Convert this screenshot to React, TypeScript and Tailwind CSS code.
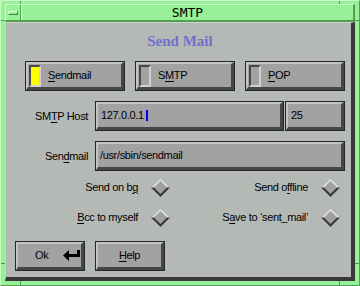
import React from "react";

const sans = { fontFamily: '"Liberation Sans", Arial, sans-serif' };

function Raised({ className, inner, children }: { className: string; inner?: string; children?: React.ReactNode }) {
  return (
    <div className={`border border-[#262626] ${className}`}>
      <div
        className={`h-full w-full border-t-2 border-l-2 border-b-[3px] border-r-[3px] border-t-[#c4c4c4] border-l-[#c4c4c4] border-b-[#464646] border-r-[#464646] bg-[#a2a2a2] flex items-center ${inner ?? ""}`}
      >
        {children}
      </div>
    </div>
  );
}

function Indicator({ on }: { on?: boolean }) {
  return (
    <div
      className={`ml-[1px] w-[12px] h-[22px] border-2 border-t-[#4a4a4a] border-l-[#4a4a4a] border-b-[#d2d2d2] border-r-[#d2d2d2] ${on ? "bg-[#ffff00]" : "bg-[#a2a2a2]"}`}
    />
  );
}

function Diamond() {
  return (
    <svg width="19" height="19" viewBox="0 0 19 19" className="shrink-0">
      <polygon points="9.5,0 19,9.5 9.5,19 0,9.5" fill="#3a3a3a" />
      <polygon points="0,9.5 9.5,0 19,9.5" fill="#dcdcdc" />
      <polygon points="9.5,3 16,9.5 9.5,16 3,9.5" fill="#a0a0a0" />
    </svg>
  );
}

function Check({ children, w }: { children: React.ReactNode; w: string }) {
  return (
    <div className={`flex items-center justify-end gap-[13px] ${w}`}>
      <span className="text-[11px] tracking-[-0.35px] text-black whitespace-nowrap">{children}</span>
      <Diamond />
    </div>
  );
}

const U = ({ children }: { children: React.ReactNode }) => (
  <span className="underline underline-offset-2 decoration-1">{children}</span>
);

export default function App() {
  return (
    <div
      className="relative w-[360px] h-[286px] bg-[#98f098] border border-t-[#c8ffc8] border-l-[#c8ffc8] border-b-[#50a050] border-r-[#50a050] pt-[3px] pl-[4px] pr-[4px] pb-[4px] flex flex-col"
      style={sans}
    >
      {/* frame corner separators */}
      <div className="absolute left-[19px] top-0 w-px h-[3px] bg-[#50a050]" />
      <div className="absolute right-[19px] top-0 w-px h-[3px] bg-[#50a050]" />
      <div className="absolute left-0 top-[19px] w-[4px] h-px bg-[#50a050]" />
      <div className="absolute right-0 top-[19px] w-[4px] h-px bg-[#50a050]" />
      <div className="absolute left-[19px] bottom-0 w-px h-[4px] bg-[#50a050]" />
      <div className="absolute right-[19px] bottom-0 w-px h-[4px] bg-[#50a050]" />
      <div className="absolute left-0 bottom-[21px] w-[4px] h-px bg-[#50a050]" />
      <div className="absolute right-0 bottom-[21px] w-[4px] h-px bg-[#50a050]" />

      {/* title bar */}
      <div className="h-[18px] flex border-t border-l border-b-2 border-r-2 border-t-[#c8ffc8] border-l-[#c8ffc8] border-b-[#50a050] border-r-[#50a050]">
        <div className="w-[15px] h-full flex items-center justify-center border-r border-r-[#50a050]">
          <div className="w-[10px] h-[4px] border border-t-[#e0ffe0] border-l-[#e0ffe0] border-b-[#408040] border-r-[#408040]" />
        </div>
        <div
          className="flex-1 flex items-center justify-center text-[13px] leading-none text-black border-l border-l-[#c8ffc8]"
          style={{ fontFamily: '"DejaVu Sans Mono", monospace' }}
        >
          SMTP
        </div>
      </div>

      {/* client panel */}
      <div className="flex-1 bg-[#b5b9b5] border-t border-l border-b-4 border-r-4 border-t-[#cdd1cd] border-l-[#cdd1cd] border-b-[#383838] border-r-[#383838] pl-[9px] pr-[6px] flex flex-col">
        <div
          className="h-[38px] pt-[9px] text-center text-[15px] leading-[18px] font-bold text-[#7070d0]"
          style={{ fontFamily: '"Liberation Serif", "Times New Roman", serif' }}
        >
          Send Mail
        </div>

        <div className="flex gap-[10px] pl-[10px] text-[11px] tracking-[-0.35px] text-black">
          <Raised className="w-[100px] h-[30px]">
            <Indicator on />
            <span className="ml-[7px]"><U>S</U>endmail</span>
          </Raised>
          <Raised className="w-[100px] h-[30px]">
            <Indicator />
            <span className="ml-[7px]">S<U>M</U>TP</span>
          </Raised>
          <Raised className="w-[100px] h-[30px]">
            <Indicator />
            <span className="ml-[7px]"><U>P</U>OP</span>
          </Raised>
        </div>

        <div className="mt-[10px] flex items-center text-[11px] tracking-[-0.35px] text-black">
          <div className="w-[80px] pr-[7px] text-right whitespace-nowrap">SM<U>T</U>P Host</div>
          <Raised className="w-[189px] h-[30px]" inner="pl-[3px]">
            <span>127.0.0.1</span>
            <span className="ml-[2px] inline-block w-[2px] h-[11px] bg-[#0000ff]" />
          </Raised>
          <Raised className="ml-px w-[60px] h-[30px]" inner="pl-[3px]">
            <span>25</span>
          </Raised>
        </div>

        <div className="mt-[10px] flex items-center text-[11px] tracking-[-0.35px] text-black">
          <div className="w-[80px] pr-[7px] text-right whitespace-nowrap">Sen<U>d</U>mail</div>
          <Raised className="w-[250px] h-[30px]" inner="pl-[2px]">
            <span>/usr/sbin/sendmail</span>
          </Raised>
        </div>

        <div className="mt-[1px] flex h-[30px]">
          <Check w="w-[155px]">Send on b<U>g</U></Check>
          <Check w="w-[170px]">Send o<U>f</U>fline</Check>
        </div>
        <div className="flex h-[30px]">
          <Check w="w-[155px]"><U>B</U>cc to myself</Check>
          <Check w="w-[170px]">S<U>a</U>ve to ‘sent_mail’</Check>
        </div>

        <div className="mt-[9px] flex gap-[10px] text-[11px] tracking-[-0.35px] text-black">
          <Raised className="w-[70px] h-[30px]" inner="pl-[17px] pr-[1px] justify-between">
            <span>Ok</span>
            <svg width="17" height="11" viewBox="0 0 17 11">
              <polygon points="0,5.5 6,0 6,11" fill="#000" />
              <rect x="5" y="4" width="12" height="3" fill="#000" />
              <rect x="14" y="0" width="3" height="7" fill="#000" />
            </svg>
          </Raised>
          <Raised className="w-[70px] h-[30px]" inner="justify-center">
            <span><U>H</U>elp</span>
          </Raised>
        </div>
      </div>
    </div>
  );
}
